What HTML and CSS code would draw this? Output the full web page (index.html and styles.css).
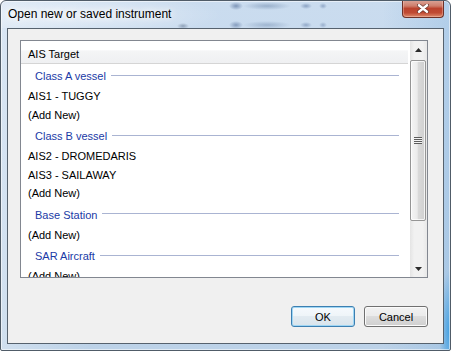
FILE: index.html
```html
<!DOCTYPE html>
<html lang="en">
<head>
  <meta charset="UTF-8" />
  <title>Open new or saved instrument</title>
  <link rel="stylesheet" href="styles.css">
</head>
<body>
  <div class="window">
    <div class="titlebar">
      <span class="title">Open new or saved instrument</span>
      <div class="close">
        <svg width="12" height="9" viewBox="0 0 12 9">
          <path d="M2 1.2 L10 7.8 M10 1.2 L2 7.8" stroke="#4a2a26" stroke-width="4" stroke-linecap="round" opacity="0.7"/>
          <path d="M2 1.2 L10 7.8 M10 1.2 L2 7.8" stroke="#fff" stroke-width="2.4" stroke-linecap="round"/>
        </svg>
      </div>
    </div>

    <div class="client">
      <div class="listbox">
        <div class="list-view">
          <div class="col-header">AIS Target</div>
          <div class="rows">
            <div class="group-header">Class A vessel</div>
            <div class="item">AIS1 - TUGGY</div>
            <div class="item">(Add New)</div>

            <div class="group-header">Class B vessel</div>
            <div class="item">AIS2 - DROMEDARIS</div>
            <div class="item">AIS3 - SAILAWAY</div>
            <div class="item">(Add New)</div>

            <div class="group-header">Base Station</div>
            <div class="item">(Add New)</div>

            <div class="group-header">SAR Aircraft</div>
            <div class="item">(Add New)</div>
          </div>
        </div>

        <div class="scrollbar">
          <div class="sb-btn">
            <svg width="7" height="4" viewBox="0 0 7 4"><path d="M0 4 L3.5 0 L7 4 Z" fill="#2b2b2b"/></svg>
          </div>
          <div class="sb-track">
            <div class="sb-thumb"><div class="grip"></div></div>
          </div>
          <div class="sb-btn">
            <svg width="7" height="4" viewBox="0 0 7 4"><path d="M0 0 L7 0 L3.5 4 Z" fill="#2b2b2b"/></svg>
          </div>
        </div>
      </div>

      <div class="buttons">
        <button class="btn btn-default">OK</button>
        <button class="btn">Cancel</button>
      </div>
    </div>
  </div>
</body>
</html>
```

FILE: styles.css
```css
body {
  margin: 0;
  background: #fff;
  font-family: "Liberation Sans", Arial, sans-serif;
}

.window {
  width: 451px;
  height: 351px;
  box-sizing: border-box;
  border: 1px solid #505c68;
  border-radius: 6px 6px 2px 2px;
  display: flex;
  flex-direction: column;
  overflow: hidden;
  box-shadow: inset 0 0 0 1px rgba(255,255,255,0.55);
  background:
    radial-gradient(ellipse 10px 60px at 448px 330px, rgba(40,150,225,0.75), transparent),
    linear-gradient(to right, rgba(255,255,255,0.3), transparent 20%, transparent 85%, rgba(80,150,210,0.2)),
    linear-gradient(#cadcef, #bcd2e8);
}

/* aero title bar */
.titlebar {
  height: 27px;
  flex: none;
  display: flex;
  align-items: flex-start;
  padding: 0 6px 0 7px;
  background:
    radial-gradient(ellipse 7px 4px at 235px 5px, rgba(50,80,130,0.5), transparent),
    radial-gradient(ellipse 24px 4px at 266px 5px, rgba(80,110,150,0.4), transparent),
    radial-gradient(ellipse 6px 3px at 305px 5px, rgba(60,90,140,0.45), transparent),
    radial-gradient(ellipse 4px 3px at 322px 5px, rgba(60,90,140,0.4), transparent),
    radial-gradient(ellipse 7px 4px at 235px 24px, rgba(50,80,130,0.45), transparent),
    radial-gradient(ellipse 24px 4px at 266px 24px, rgba(80,110,150,0.35), transparent),
    radial-gradient(ellipse 6px 3px at 305px 24px, rgba(60,90,140,0.4), transparent),
    radial-gradient(ellipse 4px 3px at 322px 24px, rgba(60,90,140,0.35), transparent),
    radial-gradient(ellipse 6px 3px at 182px 25px, rgba(50,70,100,0.4), transparent),
    radial-gradient(ellipse 150px 22px at 70px 14px, rgba(255,255,255,0.55), transparent);
}

.title {
  margin-top: 6px;
  font-size: 12px;
  line-height: 14px;
  color: #000;
  text-shadow: 0 0 6px #fff, 0 0 10px rgba(255,255,255,0.9);
  white-space: nowrap;
}

.close {
  margin-left: auto;
  margin-top: -1px;
  width: 42px;
  height: 18px;
  box-sizing: border-box;
  border: 1px solid #6e3128;
  border-top: none;
  border-radius: 0 0 4px 4px;
  display: flex;
  align-items: center;
  justify-content: center;
  background: linear-gradient(#dba79b 0%, #cf7e6c 35%, #bb432e 50%, #c04a33 75%, #dd8a6c 100%);
  box-shadow: inset 0 0 0 1px rgba(255,220,210,0.35);
}

.client {
  flex: 1;
  margin: 0 6px 6px;
  border: 1px solid #56626e;
  background: #f0f0f0;
  padding: 11px 15px 16px 12px;
  display: flex;
  flex-direction: column;
}

/* list with grouped items */
.listbox {
  height: 238px;
  box-sizing: border-box;
  border: 1px solid #828790;
  background: #fff;
  display: flex;
}

.list-view {
  flex: 1;
  display: flex;
  flex-direction: column;
  overflow: hidden;
  font-size: 11px;
}

.col-header {
  height: 23px;
  box-sizing: border-box;
  padding: 4px 7px 0;
  line-height: 18px;
  color: #000;
  border-bottom: 1px solid #d5d5d5;
  margin-right: 2px;
  background: linear-gradient(#ffffff 0%, #ffffff 40%, #f4f5f6 45%, #eff0f2 100%);
}

.rows {
  flex: 1;
  overflow: hidden;
}

.group-header {
  display: flex;
  align-items: center;
  padding: 3px 0 2px 14px;
  line-height: 18px;
  color: #1a3aa6;
}

.group-header::after {
  content: "";
  flex: 1;
  height: 1px;
  background: #aab4d2;
  margin: 0 11px 2px 5px;
}

.item {
  padding-left: 7px;
  height: 18.5px;
  line-height: 18.5px;
  color: #000;
  white-space: nowrap;
}

/* vista scrollbar */
.scrollbar {
  width: 17px;
  display: flex;
  flex-direction: column;
  background: linear-gradient(to right, #e4e4e4, #f1f1f1 25%, #f1f1f1 75%, #e8e8e8);
}

.sb-btn {
  height: 17px;
  flex: none;
  display: flex;
  align-items: center;
  justify-content: center;
}

.sb-track {
  flex: 1;
}

.sb-thumb {
  margin: 2px 1px 0 0;
  height: 161px;
  box-sizing: border-box;
  border: 1px solid #959595;
  border-radius: 2px;
  display: flex;
  align-items: center;
  justify-content: center;
  background: linear-gradient(to right, #f5f5f5 0%, #ebebeb 45%, #dadada 50%, #cfcfcf 100%);
  box-shadow: inset 0 0 0 1px rgba(255,255,255,0.75);
}

.grip {
  width: 8px;
  height: 7px;
  background: repeating-linear-gradient(#5c5c5c 0, #5c5c5c 1px, #f4f4f4 1px, #f4f4f4 2px);
}

.buttons {
  display: flex;
  justify-content: flex-end;
  gap: 9px;
  margin-top: 28px;
}

.btn {
  width: 64px;
  height: 21px;
  box-sizing: border-box;
  padding: 0;
  font-family: "Liberation Sans", Arial, sans-serif;
  font-size: 11px;
  color: #000;
  border: 1px solid #707070;
  border-radius: 3px;
  background: linear-gradient(#f2f2f2 0%, #ebebeb 50%, #dddddd 50%, #cfcfcf 100%);
  box-shadow: inset 0 0 0 1px #fbfbfb;
}

.btn-default {
  border-color: #3c7fb1;
  background: linear-gradient(#f6fafd 0%, #eef4f8 50%, #e2ebf1 50%, #d9e4ec 100%);
  box-shadow: inset 0 0 0 1px #9fd6f4;
}
```
